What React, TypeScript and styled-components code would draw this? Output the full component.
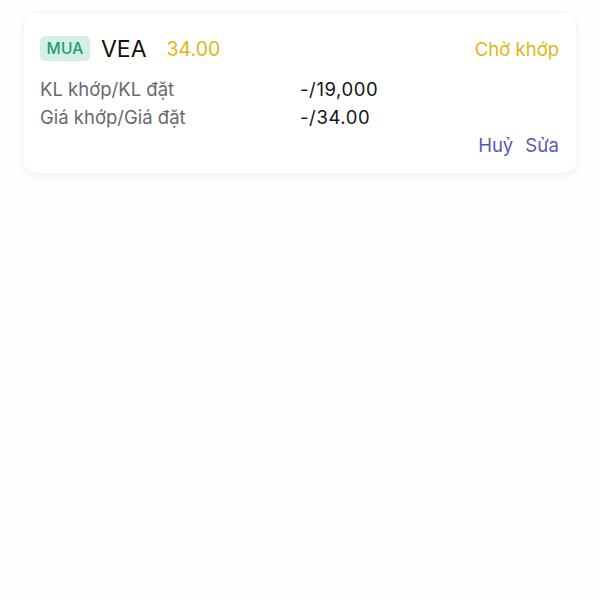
import React from 'react';
import styled, { createGlobalStyle } from 'styled-components';

const GlobalStyle = createGlobalStyle`
    html, body {
        margin: 0;
        padding: 0;
        background: #ffffff;
        font-family: Inter, "Noto Sans", "Liberation Sans", sans-serif;
    }
`;

const Page = styled.div`
    width: 600px;
    height: 600px;
    box-sizing: border-box;
    padding: 14px 24px;
    background: #fefefe;
`;

const Card = styled.div`
    background: #fff;
    border-radius: 12px;
    box-shadow: 0 2px 10px rgba(0, 0, 0, 0.07);
    padding: 22px 17px 14px 16px;
    display: flex;
    flex-direction: column;
`;

const Header = styled.div`
    display: flex;
    align-items: center;
    justify-content: space-between;
    height: 25px;
`;

const HeaderLeft = styled.div`
    display: flex;
    align-items: center;
`;

const SideBadge = styled.span<{ side: 'buy' | 'sell' }>`
    display: inline-flex;
    align-items: center;
    justify-content: center;
    width: 50px;
    height: 25px;
    border-radius: 5px;
    font-size: 15.5px;
    font-weight: 500;
    letter-spacing: 0.2px;
    color: ${({ side }) => (side === 'buy' ? '#1e9b72' : '#d9433b')};
    background: ${({ side }) => (side === 'buy' ? '#d4efe5' : '#fbe0de')};
`;

const Symbol = styled.span`
    margin-left: 11px;
    font-size: 23px;
    color: #111;
`;

const Price = styled.span`
    margin-left: 20px;
    font-size: 19.5px;
    color: #e2b614;
`;

const Status = styled.span`
    font-size: 18.5px;
    color: #e2b614;
`;

const Rows = styled.div`
    margin-top: 14px;
    display: flex;
    flex-direction: column;
`;

const Row = styled.div`
    display: grid;
    grid-template-columns: 260px 1fr;
    height: 28px;
    align-items: center;
    font-size: 18.5px;
`;

const Label = styled.span`
    color: #68686c;
`;

const Value = styled.span`
    color: #151515;
    letter-spacing: 0.6px;
`;

const Actions = styled.div`
    display: flex;
    justify-content: flex-end;
    gap: 12px;
    height: 28px;
    align-items: center;
`;

const ActionButton = styled.button`
    border: none;
    background: none;
    padding: 0;
    font: inherit;
    font-size: 18.5px;
    color: #5a57bd;
    cursor: pointer;
`;

export default function App() {
    return (
        <>
            <GlobalStyle />
            <Page>
                <Card>
                    <Header>
                        <HeaderLeft>
                            <SideBadge side="buy">MUA</SideBadge>
                            <Symbol>VEA</Symbol>
                            <Price>34.00</Price>
                        </HeaderLeft>
                        <Status>Chờ khớp</Status>
                    </Header>
                    <Rows>
                        <Row>
                            <Label>KL khớp/KL đặt</Label>
                            <Value>-/19,000</Value>
                        </Row>
                        <Row>
                            <Label>Giá khớp/Giá đặt</Label>
                            <Value>-/34.00</Value>
                        </Row>
                    </Rows>
                    <Actions>
                        <ActionButton>Huỷ</ActionButton>
                        <ActionButton>Sửa</ActionButton>
                    </Actions>
                </Card>
            </Page>
        </>
    );
}
